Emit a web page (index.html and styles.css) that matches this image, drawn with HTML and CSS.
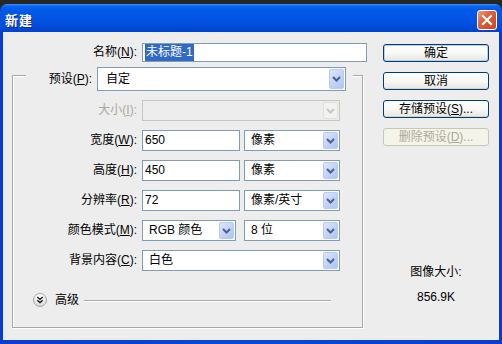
FILE: index.html
```html
<!DOCTYPE html>
<html lang="zh-CN">
<head>
<meta charset="utf-8">
<title>新建</title>
<link rel="stylesheet" href="styles.css">
</head>
<body>
<div class="window">
  <div class="titlebar">
    <span class="title">新建</span>
    <span class="close"><svg width="18" height="18" viewBox="0 0 18 18"><path d="M5 5 L13 13 M13 5 L5 13" stroke="#fff" stroke-width="2.2" stroke-linecap="square"/></svg></span>
  </div>
  <div class="frame">
    <div class="client">
      <div class="form">
        <div class="name-row">
          <label class="lbl">名称(<u>N</u>):</label>
          <div class="input name-input"><span class="hl">未标题-1</span></div>
        </div>
        <div class="group">
          <div class="preset-row">
            <label class="lbl">预设(<u>P</u>):</label>
            <div class="select preset"><span class="val">自定</span><span class="arrow"><svg width="9" height="6" viewBox="0 0 9 6"><path d="M1 1 L4.5 4.5 L8 1" fill="none" stroke="#4d6185" stroke-width="2"/></svg></span></div>
          </div>
          <div class="rows">
            <label class="lbl disabled">大小(<u>I</u>):</label>
            <div class="select off"><span class="val"></span><span class="arrow"><svg width="9" height="6" viewBox="0 0 9 6"><path d="M1 1 L4.5 4.5 L8 1" fill="none" stroke="#c6c6c6" stroke-width="2"/></svg></span></div>

            <label class="lbl">宽度(<u>W</u>):</label>
            <div class="pair">
              <div class="input num">650</div>
              <div class="select unit"><span class="val">像素</span><span class="arrow"><svg width="9" height="6" viewBox="0 0 9 6"><path d="M1 1 L4.5 4.5 L8 1" fill="none" stroke="#4d6185" stroke-width="2"/></svg></span></div>
            </div>

            <label class="lbl">高度(<u>H</u>):</label>
            <div class="pair">
              <div class="input num">450</div>
              <div class="select unit"><span class="val">像素</span><span class="arrow"><svg width="9" height="6" viewBox="0 0 9 6"><path d="M1 1 L4.5 4.5 L8 1" fill="none" stroke="#4d6185" stroke-width="2"/></svg></span></div>
            </div>

            <label class="lbl">分辨率(<u>R</u>):</label>
            <div class="pair">
              <div class="input num">72</div>
              <div class="select unit"><span class="val">像素/英寸</span><span class="arrow"><svg width="9" height="6" viewBox="0 0 9 6"><path d="M1 1 L4.5 4.5 L8 1" fill="none" stroke="#4d6185" stroke-width="2"/></svg></span></div>
            </div>

            <label class="lbl">颜色模式(<u>M</u>):</label>
            <div class="pair">
              <div class="select mode"><span class="val">RGB 颜色</span><span class="arrow"><svg width="9" height="6" viewBox="0 0 9 6"><path d="M1 1 L4.5 4.5 L8 1" fill="none" stroke="#4d6185" stroke-width="2"/></svg></span></div>
              <div class="select unit"><span class="val">8 位</span><span class="arrow"><svg width="9" height="6" viewBox="0 0 9 6"><path d="M1 1 L4.5 4.5 L8 1" fill="none" stroke="#4d6185" stroke-width="2"/></svg></span></div>
            </div>

            <label class="lbl">背景内容(<u>C</u>):</label>
            <div class="select"><span class="val">白色</span><span class="arrow"><svg width="9" height="6" viewBox="0 0 9 6"><path d="M1 1 L4.5 4.5 L8 1" fill="none" stroke="#4d6185" stroke-width="2"/></svg></span></div>
          </div>
          <div class="advanced">
            <svg class="adv-icon" width="14" height="14" viewBox="0 0 14 14">
              <defs><linearGradient id="g" x1="0" y1="0" x2="0" y2="1"><stop offset="0" stop-color="#ffffff"/><stop offset="1" stop-color="#d9d9d9"/></linearGradient></defs>
              <circle cx="7" cy="7" r="6.5" fill="url(#g)" stroke="#a3a3a3"/>
              <path d="M4.3 4 L7 6.4 L9.7 4 M4.3 7.2 L7 9.6 L9.7 7.2" fill="none" stroke="#222" stroke-width="1.4"/>
            </svg>
            <span class="adv-text">高级</span>
            <span class="adv-line"></span>
          </div>
        </div>
      </div>
      <div class="side">
        <div class="btn default">确定</div>
        <div class="btn">取消</div>
        <div class="btn">存储预设(<u>S</u>)...</div>
        <div class="btn disabled">删除预设(<u>D</u>)...</div>
        <div class="info">
          <div class="info-label">图像大小:</div>
          <div class="info-value">856.9K</div>
        </div>
      </div>
    </div>
  </div>
</div>
</body>
</html>
```

FILE: styles.css
```css
* { box-sizing: border-box; }
html, body { margin: 0; padding: 0; }
body {
  width: 502px;
  height: 344px;
  overflow: hidden;
  background: #262626;
  font-family: "Liberation Sans", "Noto Sans CJK SC", sans-serif;
  font-size: 12px;
  color: #000;
}
.window {
  margin-top: 4px;
  width: 502px;
  height: 340px;
  display: flex;
  flex-direction: column;
  border-radius: 7px 7px 0 0;
  overflow: hidden;
}
.titlebar {
  height: 28px;
  flex: none;
  display: flex;
  align-items: center;
  justify-content: space-between;
  padding: 4px 5px 0 5px;
  background: linear-gradient(to bottom, #3d95ff 0px, #0a66f0 2px, #0059e8 6px, #0455e4 14px, #014bd9 23px, #0043cc 28px);
}
.title {
  font-family: "Noto Sans CJK SC", sans-serif;
  font-weight: bold;
  font-size: 13px;
  line-height: 16px;
  color: #fff;
  text-shadow: 1px 1px 0 #0b2a8a;
  letter-spacing: 1px;
}
.close {
  width: 20px;
  height: 20px;
  border: 1px solid #fff;
  border-radius: 3px;
  background: linear-gradient(135deg, #f39a7c 0%, #e0603c 40%, #cc4420 100%);
  display: flex;
  align-items: center;
  justify-content: center;
}
.frame {
  flex: 1;
  padding: 0 3px 4px 3px;
  background: linear-gradient(to right, #0a3cd0, #0b46da 50%, #0a3cd0);
}
.client {
  height: 100%;
  background: #ededed;
  display: flex;
  align-items: flex-start;
}
.form {
  width: 351px;
  margin-left: 9px;
  padding-top: 11px;
}
.lbl {
  text-align: right;
  white-space: nowrap;
  line-height: 21px;
}
.lbl.disabled { color: #aca899; }
.name-row {
  display: grid;
  grid-template-columns: 125px 225px;
  column-gap: 5px;
  height: 19px;
  align-items: center;
}
.name-row .lbl { line-height: 19px; }
.input {
  height: 21px;
  border: 1px solid #7f9db9;
  background: #fff;
  padding-left: 2px;
  line-height: 19px;
  white-space: nowrap;
  overflow: hidden;
}
.name-input {
  height: 19px;
  line-height: 17px;
  padding-left: 2px;
}
.hl {
  display: inline-block;
  background: #316ac5;
  color: #fff;
  line-height: 17px;
  padding: 0 1px;
}
.group {
  margin-top: 13px;
  height: 253px;
  border: 1px solid #a8a8a8;
  box-shadow: 1px 1px 0 #fff, inset 1px 1px 0 #fff;
}
.preset-row {
  margin-top: -9px;
  margin-left: 13px;
  width: 327px;
  height: 24px;
  padding-right: 7px;
  background: #ededed;
  display: flex;
  justify-content: flex-end;
  align-items: center;
  gap: 5px;
}
.select {
  height: 21px;
  border: 1px solid #7f9db9;
  background: #fff;
  display: flex;
  align-items: center;
  white-space: nowrap;
}
.select .val {
  flex: 1;
  padding-left: 6px;
  line-height: 19px;
  overflow: hidden;
}
.select .arrow {
  align-self: stretch;
  width: 15px;
  margin: 1px;
  border: 1px solid #b9cbf3;
  border-radius: 2px;
  background: linear-gradient(135deg, #dde7fd 0%, #c3d4fa 50%, #afc4f3 100%);
  display: flex;
  align-items: center;
  justify-content: center;
}
.select.preset { width: 249px; height: 24px; }
.select.preset .val { padding-left: 8px; }
.select.off {
  border-color: #c9c7ba;
  background: #ededed;
}
.select.off .arrow {
  border-color: #e0e0dc;
  background: #f2f2f0;
}
.rows {
  margin-top: 9px;
  display: grid;
  grid-template-columns: 124px 198px;
  grid-auto-rows: 21px;
  column-gap: 5px;
  row-gap: 9px;
}
.pair {
  display: flex;
  justify-content: space-between;
}
.input.num { width: 98px; }
.select.unit { width: 96px; }
.select.mode { width: 94px; }
.advanced {
  margin-top: 22px;
  height: 14px;
  padding-left: 20px;
  display: flex;
  align-items: center;
}
.adv-icon { flex: none; display: block; }
.adv-text {
  margin-left: 8px;
  line-height: 14px;
}
.adv-line {
  flex: 1;
  margin-left: 5px;
  margin-right: 31px;
  height: 2px;
  border-top: 1px solid #a8a8a8;
  border-bottom: 1px solid #fff;
  margin-top: 1px;
}
.side {
  width: 106px;
  margin-left: 20px;
  padding-top: 12px;
  display: flex;
  flex-direction: column;
  gap: 10px;
}
.btn {
  height: 18px;
  border: 1px solid #003c74;
  border-radius: 3px;
  background: linear-gradient(to bottom, #ffffff 0%, #f7f7f4 55%, #e6e4dc 100%);
  box-shadow: inset 0 -1px 0 #d8d3c8;
  display: flex;
  align-items: center;
  justify-content: center;
  line-height: 16px;
  white-space: nowrap;
}
.btn.default {
  box-shadow: inset 0 0 0 1px #b7cff2, inset 0 -1px 0 #8fb0e6;
}
.btn.disabled {
  border-color: #c9c7ba;
  background: #f5f4ea;
  box-shadow: none;
  color: #aca899;
}
.info {
  margin-top: 108px;
  text-align: center;
  line-height: 16px;
}
.info-value { margin-top: 9px; }
```
